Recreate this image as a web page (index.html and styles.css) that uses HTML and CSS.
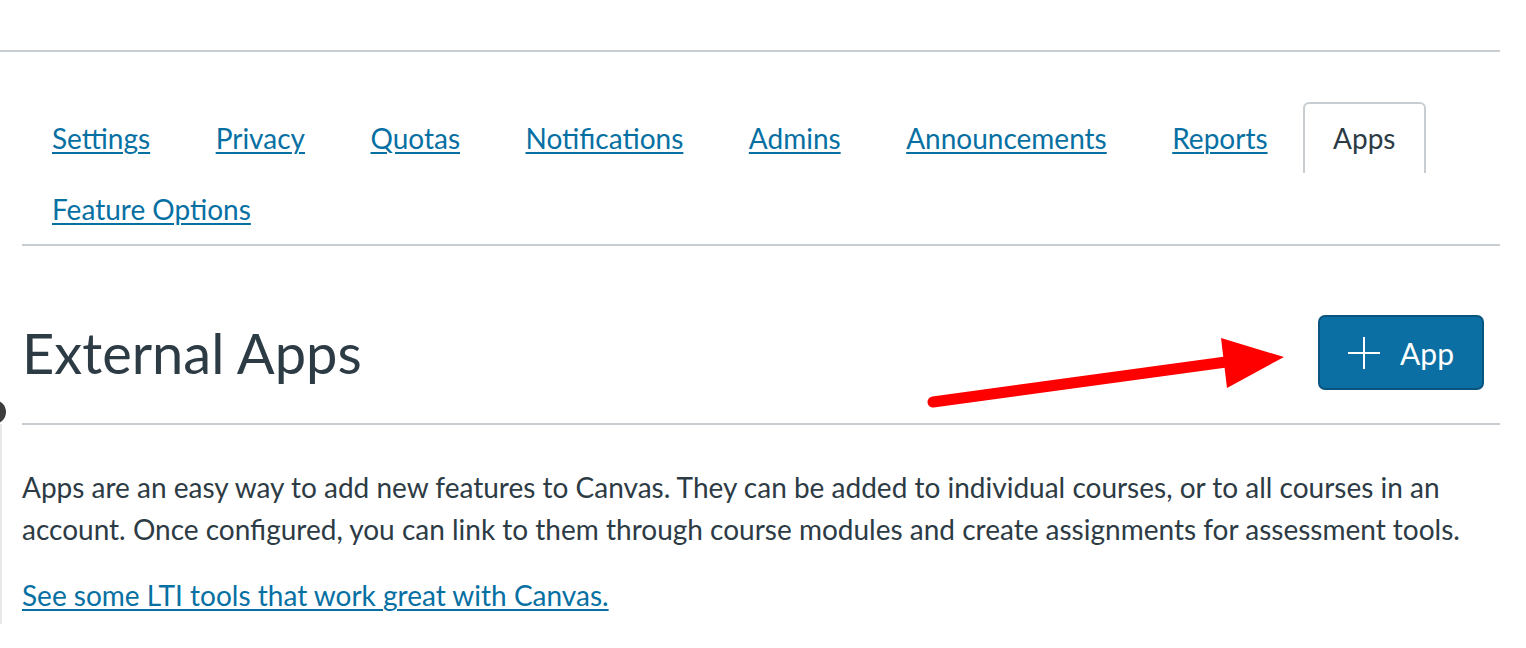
FILE: index.html
```html
<!DOCTYPE html>
<html>
<head>
    <title>External Apps</title>
    <link rel="stylesheet" href="styles.css">
</head>
<body>
    <div class="top-rule"></div>

    <div class="content">
        <ul class="tabs">
            <li><a href="#">Settings</a></li>
            <li><a href="#">Privacy</a></li>
            <li><a href="#">Quotas</a></li>
            <li><a href="#">Notifications</a></li>
            <li><a href="#">Admins</a></li>
            <li><a href="#">Announcements</a></li>
            <li><a href="#">Reports</a></li>
            <li class="active"><span>Apps</span></li>
            <li><a href="#">Feature Options</a></li>
        </ul>

        <div class="page-header">
            <h1>External Apps</h1>
            <button class="add-app">
                <svg width="32" height="32" viewBox="0 0 32 32">
                    <path d="M16 0v32M0 16h32" stroke="#fff" stroke-width="2"/>
                </svg>
                App
            </button>
        </div>

        <p class="intro">Apps are an easy way to add new features to Canvas. They can be added to individual courses, or to all courses in an account. Once configured, you can link to them through course modules and create assignments for assessment tools.</p>
        <p class="intro"><a href="#">See some LTI tools that work great with Canvas.</a></p>
    </div>

    <!-- bits overlaid on the screenshot -->
    <div class="edge-dot"></div>
    <div class="edge-line"></div>
    <svg class="arrow" width="1526" height="648">
        <line x1="933" y1="402" x2="1226" y2="362" stroke="#ff0000" stroke-width="11" stroke-linecap="round"/>
        <polygon points="1221,338 1284,357 1227,388" fill="#ff0000"/>
    </svg>
</body>
</html>
```

FILE: styles.css
```css
body { margin: 0; font-family: Lato, "Open Sans", sans-serif; color: #2d3b45; background: #fff; }
a { color: #0770a3; text-decoration: underline; text-decoration-thickness: 2px; text-underline-offset: 3px; }

.top-rule { margin-top: 50px; width: 1500px; border-top: 2px solid #c7cdd1; }
.content { margin: 0 26px 0 22px; }

.tabs { list-style: none; margin: 50px 0 0; padding: 0; display: flex; flex-wrap: wrap; border-bottom: 2px solid #c7cdd1; font-size: 28px; line-height: 69px; }
.tabs li { padding: 0 28px; margin-right: 5.5px; border: 2px solid transparent; border-bottom: none; }
.tabs li.active { border-color: #c7cdd1; border-radius: 6px 6px 0 0; color: #2d3b45; }

.page-header { display: flex; justify-content: space-between; align-items: center; margin-top: 69px; padding: 0 16px 33px 0; border-bottom: 2px solid #c7cdd1; }
.page-header h1 { margin: 0; font-size: 56px; font-weight: normal; line-height: 1.25; }

.add-app { display: flex; align-items: center; gap: 20px; height: 75px; padding: 0 28px; background: #0b6fa3; border: 2px solid #0a5580; border-radius: 7px; color: #fff; font-family: Lato, sans-serif; font-size: 30px; cursor: pointer; }

.intro { margin: 41px 0 0; font-size: 28px; line-height: 42px; }
.intro + .intro { margin-top: 24px; }

.edge-dot { position: absolute; left: -18px; top: 400px; width: 24px; height: 24px; border-radius: 50%; background: #3d3d3d; }
.edge-line { position: absolute; left: 0; top: 424px; width: 2px; height: 200px; background: #e6e8ea; }
.arrow { position: absolute; left: 0; top: 0; pointer-events: none; }
```
